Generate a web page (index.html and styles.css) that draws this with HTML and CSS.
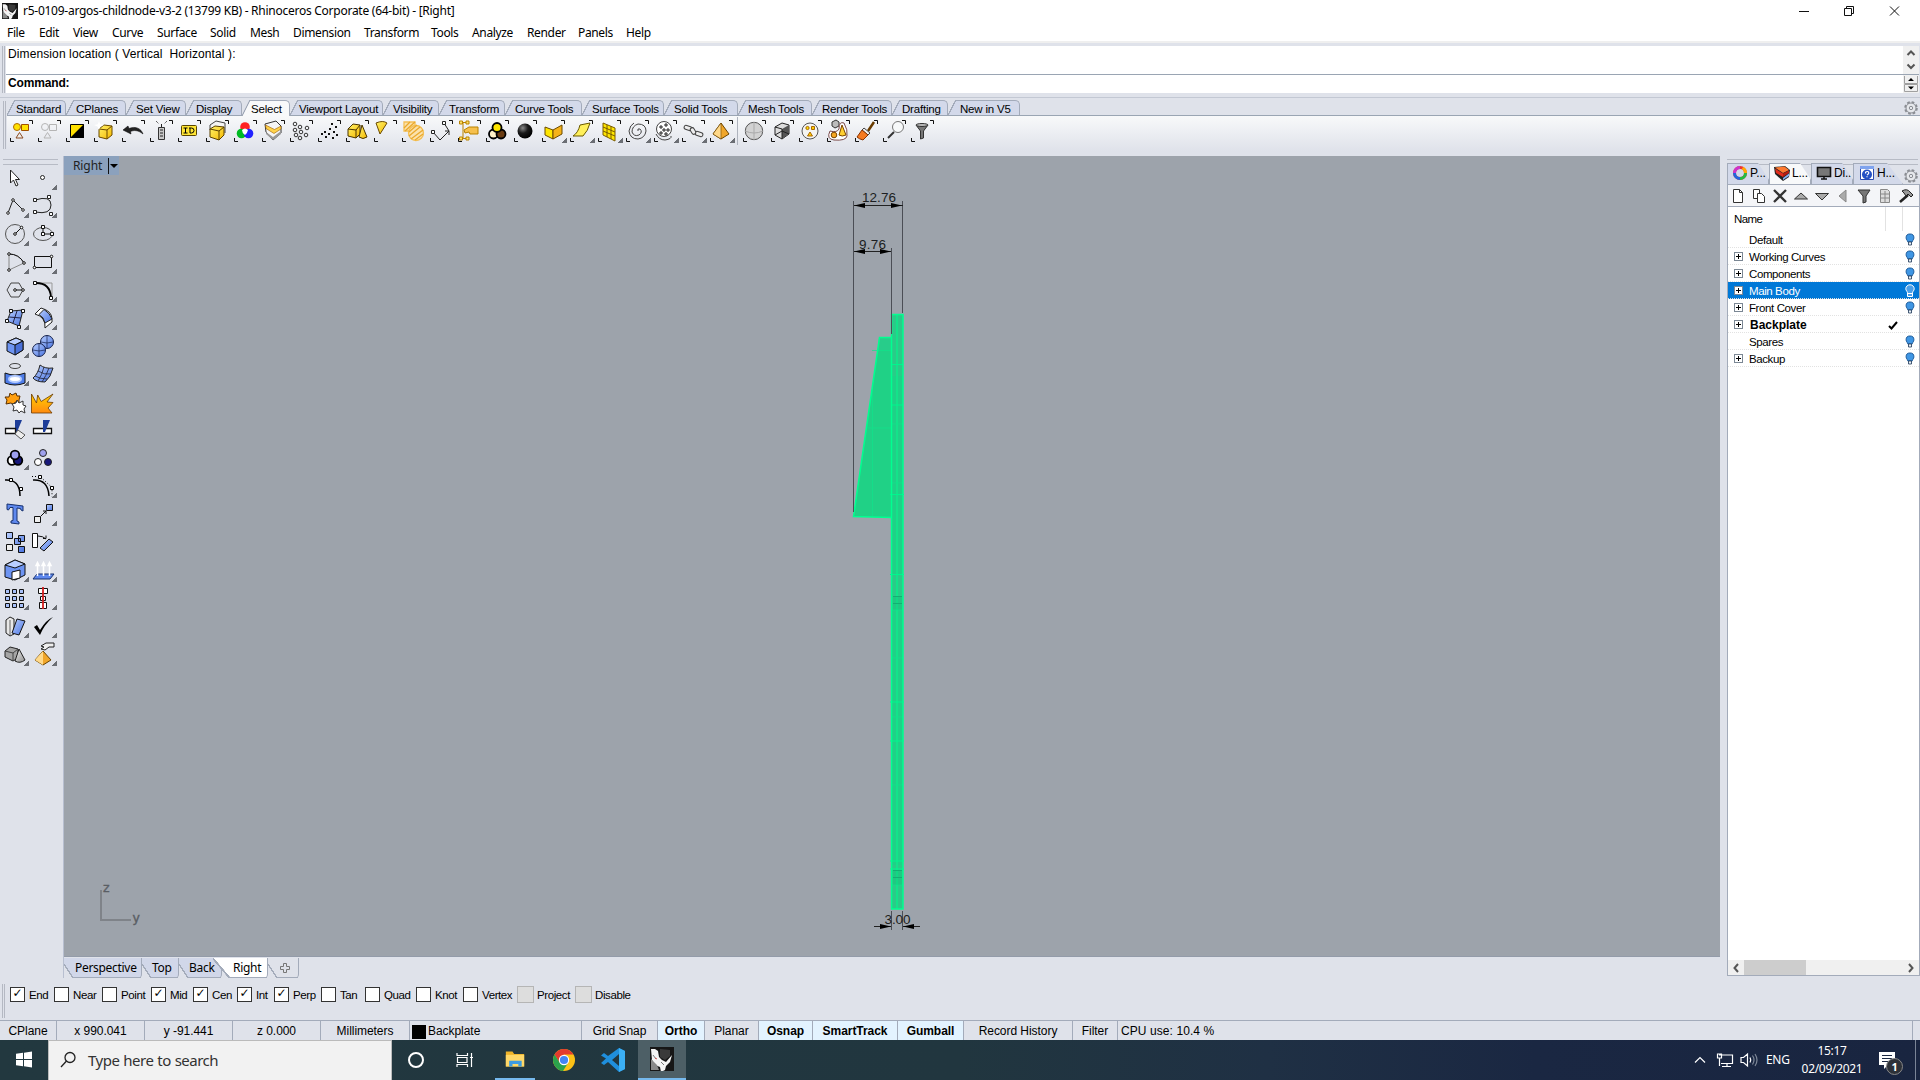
FILE: index.html
```html
<!DOCTYPE html>
<html lang="en">
<head>
<meta charset="utf-8">
<title>r5-0109-argos-childnode-v3-2 - Rhinoceros Corporate</title>
<link rel="stylesheet" href="styles.css">
</head>
<body>
<svg class="defs" width="0" height="0">
<defs>
<linearGradient id="gy" x1="0" y1="0" x2="1" y2="1"><stop offset="0" stop-color="#fff36a"/><stop offset="1" stop-color="#f5b800"/></linearGradient>
<linearGradient id="gb" x1="0" y1="0" x2="1" y2="1"><stop offset="0" stop-color="#b8ceff"/><stop offset="1" stop-color="#4a74e0"/></linearGradient>
<linearGradient id="gg" x1="0" y1="0" x2="1" y2="1"><stop offset="0" stop-color="#f2f2f2"/><stop offset="1" stop-color="#8d8d8d"/></linearGradient>
<linearGradient id="go" x1="0" y1="0" x2="0" y2="1"><stop offset="0" stop-color="#ffd000"/><stop offset="1" stop-color="#ff8a10"/></linearGradient>
<radialGradient id="gk" cx=".35" cy=".3" r=".7"><stop offset="0" stop-color="#888"/><stop offset=".5" stop-color="#1a1a1a"/><stop offset="1" stop-color="#000"/></radialGradient>
<symbol id="br" viewBox="0 0 28 28"><path d="M22 3.5h3.5V7M3.500 21v3.500H7" fill="none" stroke="#111"/></symbol>
<symbol id="rhino" viewBox="0 0 24 24"><path d="M0 0h24v24H0z" fill="#161616"/><path d="M1 2l4 0 3 2 1 6 3 3 4 2 6-7-2 7-4 4-1 4-4 2-1-5-5-2-3-5z" fill="#f4f4f4"/><path d="M10 2l10 1v6l-5 4-5-3z" fill="#3a3a3a"/><path d="M1 12l6 6 2 5H1z" fill="#8a8a8a"/><path d="M3 8l3 4M11 15l3 3" stroke="#777" fill="none"/><path d="M5 11l2 1" stroke="#c55"/></symbol>
<symbol id="gear" viewBox="0 0 16 16"><circle cx="8" cy="8" r="5.700" fill="none" stroke="#8a8d93" stroke-width="2.200" stroke-dasharray="2.600 1.870"/><circle cx="8" cy="8" r="5" fill="#e6e8ec" stroke="#8a8d93"/><circle cx="8" cy="8" r="1.700" fill="none" stroke="#8a8d93"/></symbol>
<symbol id="bulb" viewBox="0 0 10 14"><path d="M5 1a3.800 3.800 0 0 1 3.900 3.800c0 1.800-1.400 2.500-1.600 4H2.700c-.2-1.500-1.600-2.200-1.600-4A3.800 3.800 0 0 1 5 1z" fill="#3f96e4" stroke="#1d5c9c"/><path d="M3.500 9h3v3h-3z" fill="#e8f0f8" stroke="#1c3554" stroke-width=".8"/></symbol>
</defs>
</svg>

<header class="titlebar">
  <svg class="app-icon"><use href="#rhino"/></svg>
  <h1 class="title">r5-0109-argos-childnode-v3-2 (13799 KB) - Rhinoceros Corporate (64-bit) - [Right]</h1>
  <svg class="win-buttons" viewBox="0 0 112 20" fill="none" stroke="#111"><path d="M1 10.500h10M46.500 7.500h7v7h-7zM48.500 7.500v-2h7v7h-2M92 5.500l9 9M101 5.500l-9 9"/></svg>
</header>

<nav class="menubar"><span>File</span><span>Edit</span><span>View</span><span>Curve</span><span>Surface</span><span>Solid</span><span>Mesh</span><span>Dimension</span><span>Transform</span><span>Tools</span><span>Analyze</span><span>Render</span><span>Panels</span><span>Help</span></nav>

<section class="command">
  <div class="cmd-box">
    <div class="cmd-history"><p>Dimension location ( Vertical&nbsp; Horizontal ):</p>
      <svg class="cmd-scroll" viewBox="0 0 16 28" fill="none" stroke="#555" stroke-width="2"><path d="M4.500 9L8 5.500 11.500 9M4.500 18.500L8 22l3.500-3.500"/></svg></div>
    <div class="cmd-line"><b>Command:</b>
      <svg class="cmd-scroll" viewBox="0 0 16 18"><path d="M1.500 1v7.500h13V1M1.500 9.500h13v7h-13z" fill="#f0f0f0" stroke="#a0a0a0"/><path d="M5 6h6L8 3zM5 11.500h6L8 14.500z" fill="#000"/></svg></div>
  </div>
</section>

<section class="toolbar">
  <div class="tool-tabs">
    <div class="tabs"><span>Standard</span><span>CPlanes</span><span>Set View</span><span>Display</span><span class="on">Select</span><span>Viewport Layout</span><span>Visibility</span><span>Transform</span><span>Curve Tools</span><span>Surface Tools</span><span>Solid Tools</span><span>Mesh Tools</span><span>Render Tools</span><span>Drafting</span><span>New in V5</span></div>
    <svg class="gear"><use href="#gear"/></svg>
  </div>
  <div class="tool-icons">
    <svg viewBox="0 0 28 28"><use href="#br"/><circle cx="10" cy="10" r="3.500" fill="#ffe100" stroke="#b06a00"/><path d="M14.500 7.500h7v6h-7z" fill="#ffe100" stroke="#a05000"/><path d="M12.500 15.500l3.500 5.500H9z" fill="#eee" stroke="#8a4a20"/></svg>
    <svg viewBox="0 0 28 28"><use href="#br"/><g fill="none" stroke="#b5b5b5"><circle cx="10" cy="10" r="3.500"/><path d="M14.500 7.500h7v6h-7zM12.500 15.500l3.500 5.500H9z"/></g></svg>
    <svg viewBox="0 0 28 28"><use href="#br"/><path d="M7.500 7.500h13v13h-13z" fill="#ffe000" stroke="#000"/><path d="M21 7v14H7z"/></svg>
    <svg viewBox="0 0 28 28"><use href="#br"/><path d="M8 12l5-4 8 1v9l-5 4-8-2z" fill="url(#gy)" stroke="#6b4a00"/><path d="M8 12l8 1 5-4M16 13v9" fill="none" stroke="#6b4a00"/><path d="M8 4l1.200 3.200L13 8l-3.500 1.500L8 13l-1.500-3.500L3 8l3.800-.8z" fill="#fff"/></svg>
    <svg viewBox="0 0 28 28"><use href="#br"/><path d="M4 13l5-4 1 2.500c6-2.500 12-.5 14 5.500-5-4-9-4-12.500-2.500L12 17z" fill="#222" stroke="#000" stroke-width=".5"/></svg>
    <svg viewBox="0 0 28 28"><use href="#br"/><path d="M11.500 10.500h6v12h-6z" fill="#c9c9c9" stroke="#333"/><path d="M13 13h3m-3 3h3m-3 3h3M14.500 10V7" stroke="#222" fill="none"/><path d="M9 4l3 3M20 4l-3 3" stroke="#222" stroke-dasharray="1 1"/></svg>
    <svg viewBox="0 0 28 28"><use href="#br"/><rect x="6.500" y="8.500" width="15" height="10" rx="1" fill="#ffe533" stroke="#5a4600"/><path d="M8.500 11h4m-2 0v5m-2 0h4M15 11v5h1.500q2.500 0 2.500-2.500T16.500 11H14" fill="none" stroke="#000"/></svg>
    <svg viewBox="0 0 28 28"><use href="#br"/><path d="M7 13V8l6-4 9 2v10" fill="#f4f4f4" stroke="#444"/><path d="M7 12l5-3 9 1v8l-5 5-9-3z" fill="url(#gy)" stroke="#5a4000"/><path d="M7 12l9 2 5-4M16 14v9" fill="none" stroke="#5a4000"/></svg>
    <svg viewBox="0 0 28 28"><use href="#br"/><circle cx="14" cy="10" r="4.800" fill="#f22"/><circle cx="10.500" cy="16.500" r="4.800" fill="#0b2"/><circle cx="17.500" cy="16.500" r="4.800" fill="#22f"/><path d="M11 13q3-3 6 0-1 4-3 5-3-2-3-5z" fill="#fff"/></svg>
    <svg viewBox="0 0 28 28"><use href="#br"/><path d="M6 7l11-3 5 5v7l-8 7-7-8z" fill="#f5f5f5" stroke="#333"/><path d="M7 15l7 5 8-6v3l-8 6-7-6z" fill="#999"/><path d="M6.500 8l9 4.500L22 9v3l-7 4.500-8-5z" fill="#ffd34a" stroke="#9a5a00" stroke-width=".6"/></svg>
    <svg viewBox="0 0 28 28"><use href="#br"/><g fill="none" stroke="#333"><circle cx="8" cy="7" r="1.800"/><circle cx="13" cy="10" r="1.800"/><circle cx="20" cy="11" r="1.800"/><circle cx="8" cy="13" r="1.800"/><circle cx="14" cy="15" r="1.800"/><circle cx="19" cy="18" r="1.800"/><circle cx="9" cy="18" r="1.800"/><circle cx="13" cy="21" r="1.800"/></g></svg>
    <svg viewBox="0 0 28 28"><use href="#br"/><path d="M16 6h2v2h-2zM20 9h2v2h-2zM14 11h2v2h-2zM9 14h2v2H9zM13 16h2v2h-2zM18 14h2v2h-2zM21 17h2v2h-2zM6 16h2v2H6zM10 19h2v2h-2zM17 20h2v2h-2z" fill="#111"/></svg>
    <svg viewBox="0 0 28 28"><use href="#br"/><path d="M5 12l5-5 7 1v9l-4 4-8-2z" fill="url(#gy)" stroke="#4a3400"/><path d="M5 12l8 1 4-5M13 13v8" fill="none" stroke="#4a3400"/><path d="M19 8l5 12q-4 3-8 0z" fill="url(#gy)" stroke="#4a3400"/></svg>
    <svg viewBox="0 0 28 28"><use href="#br"/><path d="M5 6q7-3 11 0L9 17z" fill="url(#gy)" stroke="#6b4a00"/></svg>
    <svg viewBox="0 0 28 28"><use href="#br"/><g stroke="#f3bf55" stroke-width="1.300" fill="#fbe2ac"><path d="M5 5h11v9H5z"/><circle cx="17" cy="16" r="7.500"/><path d="M5 11l6-6M6 14L16 5M10 15l8-7M10 19l11-9M12 22l12-9M16 23l8-6" fill="none" stroke="#eaa92c"/></g></svg>
    <svg viewBox="0 0 28 28"><use href="#br"/><path d="M17 6l5 8M6 15l7 8 9-9m-4 0h4v4" fill="none" stroke="#222"/><path d="M15.500 4.500h3v3h-3zM4.500 13.500h3v3h-3z" fill="#fff" stroke="#222"/></svg>
    <svg viewBox="0 0 28 28"><use href="#br"/><path d="M5 5.500h9M5 21.500h9M8 6v15" stroke="#b98200" fill="none"/><path d="M4.500 4h3v3h-3zM11 4h3v3h-3zM4.500 20h3v3h-3zM11 20h3v3h-3z" fill="#ffe36a" stroke="#b98200"/><path d="M9 13l5-3h9v7h-8l-1-2-4 1z" fill="#f6c04d" stroke="#b98200"/></svg>
    <svg viewBox="0 0 28 28"><use href="#br"/><g stroke="#000" stroke-width="1.800"><circle cx="10.500" cy="17" r="4.500" fill="#fff1c8"/><circle cx="18" cy="17" r="4.500" fill="#6a3c12"/><circle cx="14" cy="10.500" r="4.500" fill="#ffe600"/></g></svg>
    <svg viewBox="0 0 28 28"><use href="#br"/><circle cx="14" cy="14" r="7.500" fill="url(#gk)"/></svg>
    <svg class="fly" viewBox="0 0 28 28"><use href="#br"/><path d="M6 10l8 3v9l-8-4z" fill="#ffe600" stroke="#6b4a00"/><path d="M14 13l9-5v9l-9 5z" fill="#f5b218" stroke="#6b4a00"/></svg>
    <svg class="fly" viewBox="0 0 28 28"><use href="#br"/><path d="M6 19q5-3 7-11l10-2q-2 8-7 13z" fill="#fff05a" stroke="#6b5a00"/></svg>
    <svg class="fly" viewBox="0 0 28 28"><use href="#br"/><path d="M8 6l12 5v13L8 18z" fill="#ffe600" stroke="#7a5c00"/><path d="M12 8v12M16 9v13M8 10l12 5M8 14l12 5" stroke="#7a5c00" fill="none"/></svg>
    <svg class="fly" viewBox="0 0 28 28"><use href="#br"/><path d="M15 14q-1-3 2-2 3 3-1 6-5 2-7-3 0-6 6-8 8 0 8 7-1 7-8 8-8 0-9-8 1-6 5-8" fill="none" stroke="#444"/></svg>
    <svg class="fly" viewBox="0 0 28 28"><use href="#br"/><circle cx="13" cy="12" r="7.500" fill="#fff" stroke="#444"/><path d="M9 9h2v2H9zM14 7h2v2h-2zM12 12h2v2h-2zM9 15h2v2H9zM16 12h2v2h-2zM14 16h2v2h-2z" fill="none" stroke="#222"/><path d="M5 17q3 6 9 6 7-1 6-4" fill="none" stroke="#444"/></svg>
    <svg class="fly" viewBox="0 0 28 28"><use href="#br"/><g fill="#eee" stroke="#444"><rect x="5" y="9" width="8" height="4" rx="2" transform="rotate(20 9 11)"/><rect x="16" y="15" width="8" height="4" rx="2" transform="rotate(20 20 17)"/><rect x="10.500" y="12" width="7" height="4" rx="2" transform="rotate(60 14 14)"/></g></svg>
    <svg class="fly" viewBox="0 0 28 28"><use href="#br"/><path d="M14 6l8 11-8 5-8-5z" fill="#f0a62a" stroke="#6b4400"/><path d="M14 6v16l-8-5z" fill="#ffd98a" stroke="#6b4400" stroke-width=".6"/></svg>
    <i class="tool-sep"></i>
    <svg viewBox="0 0 28 28"><use href="#br"/><circle cx="14" cy="14" r="8.700" fill="#d2d2d2" stroke="#555"/><path d="M14 5v18M5 14q9 4 18 0" stroke="#aaa" fill="none"/></svg>
    <svg viewBox="0 0 28 28"><use href="#br"/><path d="M7 10l7-4 7 2v9l-7 5-7-4z" fill="#ddd" stroke="#222"/><path d="M14 12l7-4v9l-7 5z" fill="#555"/><path d="M7 10l7 2v10M7 18l7-4 7 3" stroke="#222" fill="none"/></svg>
    <svg viewBox="0 0 28 28"><use href="#br"/><circle cx="14" cy="14" r="8" fill="#f4f4f0" stroke="#555"/><circle cx="11.500" cy="11" r="1.600" fill="#ffe100" stroke="#a60"/><path d="M15.500 9.500h3v3h-3zM14 15l2.500 4h-5z" fill="#ffd000" stroke="#a60"/></svg>
    <svg viewBox="0 0 28 28"><use href="#br"/><path d="M8 5l4-2 3 2v4l-4 2-3-2z" fill="#bbb" stroke="#333"/><path d="M6 14q-4 8 4 9 12 1 13-4 1-6-3-13-5-2-5 6-2 4-9 2z" fill="#fff" stroke="#7a4a4a"/><circle cx="10" cy="18" r="2.800" fill="#f5a623" stroke="#7a4400"/><path d="M18 8l4 10q-4 2-7 0z" fill="#ffcf30" stroke="#7a4400"/></svg>
    <svg viewBox="0 0 28 28"><use href="#br"/><path d="M22 5l-6 9" stroke="#6b3d00" stroke-width="2.500"/><path d="M12 11l6 5-2 2-6-5z" fill="#eee" stroke="#444"/><path d="M10 13l6 5-5 5q-4-1-6-3z" fill="#f57a20" stroke="#8a3400"/></svg>
    <svg viewBox="0 0 28 28"><use href="#br"/><path d="M8 21l6-6" stroke="#333" stroke-width="2"/><circle cx="18" cy="10" r="5.500" fill="#f7f9fa" stroke="#777"/></svg>
    <svg viewBox="0 0 28 28"><use href="#br"/><path d="M8 8h12l-4.500 6v7l-3 1v-8z" fill="#777" stroke="#333"/><ellipse cx="14" cy="8" rx="6" ry="1.500" fill="#bbb" stroke="#333"/></svg>
  </div>
</section>

<main class="workspace">
  <aside class="sidebar">
    <svg viewBox="0 0 28 28"><path d="M9.500 6v13l3-3 2.500 6 2-1-2.500-5.500h4z" fill="#fff" stroke="#222"/></svg>
    <svg class="fly" viewBox="0 0 28 28"><circle cx="13.500" cy="13.500" r="2" fill="#fff" stroke="#222"/></svg>
    <svg class="fly" viewBox="0 0 28 28"><g fill="#fff" stroke="#222"><path d="M7 21l5-13 10 10" fill="none"/><circle cx="7" cy="21" r="1.300"/><circle cx="12" cy="8" r="1.300"/><circle cx="22" cy="18" r="1.300"/></g></svg>
    <svg class="fly" viewBox="0 0 28 28"><g fill="#fff" stroke="#222"><path d="M6 8q16-5 16 5t-16 7" fill="none"/><path d="M4.500 6.500h3v3h-3zM18.500 3.500h3v3h-3zM4.500 18.500h3v3h-3zM20.500 20.500h3v3h-3z"/></g></svg>
    <svg class="fly" viewBox="0 0 28 28"><circle cx="14" cy="14" r="9.500" fill="none" stroke="#555"/><path d="M14 14l6-6" stroke="#111"/><g fill="#fff" stroke="#111"><circle cx="14" cy="14" r="1.300"/><circle cx="20.500" cy="7.500" r="1.300"/></g></svg>
    <svg class="fly" viewBox="0 0 28 28"><ellipse cx="14" cy="14" rx="9.500" ry="6.500" fill="none" stroke="#555"/><path d="M14 7v7h9" stroke="#111" fill="none"/><path d="M12.500 5.500h3v3h-3zM12.500 12.500h3v3h-3zM21.500 12.500h3v3h-3z" fill="#fff" stroke="#111"/></svg>
    <svg class="fly" viewBox="0 0 28 28"><path d="M8 22V6q10 0 15 9z" fill="none" stroke="#888"/><path d="M8 6q10 0 15 9" fill="none" stroke="#111"/><g fill="#fff" stroke="#111"><circle cx="8" cy="6" r="1.300"/><circle cx="8" cy="22" r="1.300"/><circle cx="23" cy="15" r="1.300"/></g></svg>
    <svg class="fly" viewBox="0 0 28 28"><path d="M5.500 8.500h17v11h-17z" fill="none" stroke="#111"/><g fill="#fff" stroke="#111"><circle cx="22.500" cy="8.500" r="1.300"/><circle cx="5.500" cy="19.500" r="1.300"/></g></svg>
    <svg class="fly" viewBox="0 0 28 28"><path d="M6 14l4-7h8l4 7-4 7h-8z" fill="none" stroke="#444"/><path d="M14 14h8" stroke="#111"/><g fill="#fff" stroke="#111"><circle cx="14" cy="14" r="1.300"/><circle cx="22" cy="14" r="1.300"/></g></svg>
    <svg class="fly" viewBox="0 0 28 28"><path d="M7 7h16v15" fill="none" stroke="#999"/><path d="M7 7q14 0 15 14" fill="none" stroke="#000" stroke-width="1.800"/><path d="M4.500 5.500h3v3h-3zM20.500 20.500h3v3h-3z" fill="#fff" stroke="#111"/></svg>
    <svg class="fly" viewBox="0 0 28 28"><path d="M10 7l12-1-4 16-12-5z" fill="url(#gb)" stroke="#222"/><path d="M16 7l-4 12M8 13l12 1" stroke="#224" fill="none"/><path d="M8.500 5.500h3v3h-3zM20.500 5.500h3v3h-3zM4.500 15.500h3v3h-3zM16.500 21.500h3v3h-3z" fill="#fff" stroke="#111"/></svg>
    <svg class="fly" viewBox="0 0 28 28"><path d="M6 10l6-6q11 3 11 11v3l-7 6q1-11-10-14z" fill="#fff" stroke="#222"/><path d="M15 5.500q6 3.500 8 9.500l-7 4q-1-6-6-8.500z" fill="url(#gb)" stroke="#222"/></svg>
    <svg class="fly" viewBox="0 0 28 28"><path d="M6 10l9-4 7 3v9l-8 5-8-4z" fill="#6d94f2" stroke="#111"/><path d="M6 10l8 3 8-4-7-3z" fill="#b9ceff" stroke="#111"/><path d="M14 13l8-4v9l-8 5z" fill="#4a70d8" stroke="#111"/></svg>
    <svg class="fly" viewBox="0 0 28 28"><g fill="url(#gb)" stroke="#14204a"><circle cx="18" cy="10" r="6.500"/><circle cx="10" cy="18" r="6.500"/></g><path d="M10 12v12M4 18q6 2 12 0M18 4v12M12 10q6 2 12 0" fill="none" stroke="#14204a" stroke-width=".7"/></svg>
    <svg class="fly" viewBox="0 0 28 28"><ellipse cx="14" cy="6" rx="5.500" ry="2.500" fill="none" stroke="#444"/><path d="M4 13q10 4 20 0v10q-10 4-20 0z" fill="#4f7de8" stroke="#111"/><ellipse cx="14" cy="19" rx="6" ry="3" fill="#fff" stroke="#b8ceff" stroke-width="2"/></svg>
    <svg class="fly" viewBox="0 0 28 28"><path d="M11 5q5 4 13 3-2 9-8 14-9 0-12-4 5-4 7-13z" fill="url(#gb)" stroke="#222"/><path d="M9 11q6 4 13 3M15 7q-2 8-6 14M20 8q-3 8-7 14M6 16q5 3 12 3" stroke="#223" fill="none" stroke-width=".8"/></svg>
    <svg viewBox="0 0 28 28"><path d="M9 5l2 2 4-2 1 3 3 0-1 4 0 3-4-1-1 3-3-2-5 1 1-4-2-3 4 0z" fill="#ff9f10" stroke="#5a3000"/><path d="M16 12l2 3 4-2 0 4 3 1-2 3 1 4-4-2-2 2-2-3-4 1 1-4-2-3 4-1z" fill="#fff" stroke="#333"/></svg>
    <svg viewBox="0 0 28 28"><path d="M2.500 25V6l5 9 1.200-8 3.500 6.500L24 6l-6 8 6 .5-5 5.500 4 5z" fill="url(#go)" stroke="#6b3a00" stroke-width=".8"/></svg>
    <svg viewBox="0 0 28 28"><path d="M14 4h7l-5 12h-2z" fill="#1c3c98"/><path d="M4.500 12.500h10v5h-10z" fill="#fff" stroke="#111" stroke-width="1.300"/><path d="M17 14l7 5-4 4-6-5z" fill="#eee" stroke="#555"/></svg>
    <svg viewBox="0 0 28 28"><path d="M4.500 12.500h18v5h-18z" fill="#fff" stroke="#111" stroke-width="1.300"/><path d="M14 4h7l-5 12h-2z" fill="#1c3c98"/></svg>
    <svg class="fly" viewBox="0 0 28 28"><g stroke="#000" stroke-width="1.800"><circle cx="11" cy="16.500" r="4.300" fill="#fff"/><circle cx="17" cy="16.500" r="4.300" fill="#18187a"/><circle cx="14" cy="11" r="4.300" fill="#9ea0ee"/></g></svg>
    <svg viewBox="0 0 28 28"><g stroke="#222"><circle cx="14" cy="9" r="3.500" fill="#9ea0ee"/><circle cx="9" cy="18" r="3.500" fill="#fff"/><circle cx="19" cy="18" r="3.500" fill="#18187a"/></g></svg>
    <svg viewBox="0 0 28 28"><path d="M4 8q15-1 15 16" fill="none" stroke="#000" stroke-width="1.500"/><path d="M8.500 6.500h3v3h-3zM18.500 15.500h3v3h-3z" fill="#fff" stroke="#000"/></svg>
    <svg class="fly" viewBox="0 0 28 28"><path d="M4 8q15-1 16 16" fill="none" stroke="#000" stroke-width="1.500"/><path d="M3 4.500h8l12 11v9" fill="none" stroke="#000" stroke-dasharray="1 2"/><path d="M9.500 3.500h3v3h-3zM21.500 14.500h3v3h-3z" fill="#fff" stroke="#000"/></svg>
    <svg viewBox="0 0 28 28"><path d="M6 4l16 2v5l-2-1-.5-1.500-3.500-.5v13l2 1v2l-8-1v-2l2-.500V7.500L9 7.500 7.500 10 6 9.500z" fill="#5e88ee" stroke="#16306e"/></svg>
    <svg class="fly" viewBox="0 0 28 28"><path d="M17.500 4.500h6v6h-6z" fill="url(#gb)" stroke="#111"/><path d="M5.500 16.500h6v6h-6z" fill="#eee" stroke="#111"/><path d="M12 16l5-5m-3 0h3v3" fill="none" stroke="#111"/></svg>
    <svg viewBox="0 0 28 28"><g fill="url(#gb)" stroke="#111"><path d="M5.500 4.500h6v6h-6zM17.500 7.500h6v6h-6zM13.500 10.500h6v6h-6zM17.500 18.500h6v6h-6z"/><path d="M5.500 16.500h6v6h-6z" fill="#eee"/></g></svg>
    <svg viewBox="0 0 28 28"><path d="M3.500 5.500h5v14h-5z" fill="#fff" stroke="#111"/><path d="M11 20l9-9 4 3-9 9z" fill="url(#gb)" stroke="#111"/><path d="M9 8q5 0 8 3m-3-.500h3v-3" fill="none" stroke="#111"/></svg>
    <svg class="fly" viewBox="0 0 28 28"><path d="M4 9l10-5 10 4v11l-10 5-10-3z" fill="#6d94f2" stroke="#111"/><path d="M4 9l10 3 10-4-10-4z" fill="#b9ceff" stroke="#111"/><path d="M11 24v-8l8-2v8z" fill="#fff" stroke="#111"/></svg>
    <svg class="fly" viewBox="0 0 28 28"><path d="M8 18h17l-4 5H4z" fill="#5e88ee" stroke="#16306e"/><path d="M8.500 20V9M14.500 20V9M20.500 20V9M7 9.500l1.500-3 1.500 3zM13 9.500l1.500-3 1.500 3zM19 9.500l1.500-3 1.500 3z" fill="#fff" stroke="#fff" stroke-width="1.500"/></svg>
    <svg class="fly" viewBox="0 0 28 28"><path d="M4.500 5.500h4v4h-4zM11.500 5.500h4v4h-4zM18.500 5.500h4v4h-4zM4.500 12.500h4v4h-4zM11.500 12.500h4v4h-4zM18.500 12.500h4v4h-4zM4.500 19.500h4v4h-4zM11.500 19.500h4v4h-4zM18.500 19.500h4v4h-4z" fill="#a7c0fa" stroke="#111"/></svg>
    <svg class="fly" viewBox="0 0 28 28"><path d="M9.500 4.500h9v5h-9zM11.500 12.500h5v4h-5zM10.500 18.500h7v6h-7z" fill="#fff" stroke="#111"/><path d="M14 3v22" stroke="#d42020" stroke-width="1.800"/></svg>
    <svg class="fly" viewBox="0 0 28 28"><path d="M5 8l4-3 4 2v15l-4 2-4-3z" fill="#e8e8e8" stroke="#222"/><path d="M9 8v15" stroke="#666"/><path d="M16 7l8 2-6 14-7-2z" fill="url(#gb)" stroke="#111"/></svg>
    <svg class="fly" viewBox="0 0 28 28"><path d="M5 15l3-2 3 5Q17 8 24 5 15 13 11 23z" fill="#000"/></svg>
    <svg class="fly" viewBox="0 0 28 28"><path d="M4 11l5-4 8 2v9l-5 3-8-4z" fill="#a5a5a5" stroke="#222"/><path d="M4 11l8 2 5-4M12 13v8" fill="none" stroke="#444"/><path d="M18 9l6 11q-5 4-10 1z" fill="url(#gg)" stroke="#222"/></svg>
    <svg class="fly" viewBox="0 0 28 28"><path d="M14 11l8 9-8 5-8-5z" fill="#f0a62a" stroke="#6b4400"/><path d="M14 11v14l-8-5z" fill="#ffd98a"/><path d="M12 6l5-3h8v4h-5l-4 3-4-1 3-2z" fill="#eee" stroke="#222"/></svg>
  </aside>

  <section class="center">
    <div class="viewport">
      <div class="view-label"><span>Right</span><i></i></div>
      <svg class="scene" viewBox="64 156 1656 801">
        <path d="M879.500 337.500H891v180L853.500 516.500z" fill="#20d186"/>
        <path d="M879 338h12v12h-13z" fill="#28cc8a"/>
        <path d="M891 314h12v595h-12z" fill="#2acb88"/>
        <path d="M891 376h12v198h-12zM891 610h12v255h-12z" fill="#1fd187"/>
        <path d="M897 315v594" stroke="#14e38a" stroke-width="2"/>
        <path d="M893 596h9v14h-9zM893 870h9v15h-9z" fill="#10bf78" opacity=".35"/>
        <path d="M893 596.500h9M893 870.500h9M893 603.500h9M893 877.500h9" stroke="#12b072"/>
        <path d="M872 350.500h19M866 428h25M872.500 390v126M891 424h12M891 483h12M891 610h12M891 658h12M891 717h12M891 785h12M891 885h12" stroke="#10e48b" opacity=".7"/>
        <path d="M891 364.500h12M891 405h12M890 494.500h14M890 574.500h14M890 702h14M890 741h14M890 861h14M890 869h14" stroke="#00f58e" stroke-width="1.200"/>
        <path d="M891.500 337.500h-12L853.500 516.500l38 1M891.500 314.500h11.500v594.500h-11.500z" fill="none" stroke="#00ff90" stroke-width="1.500"/>
        <path d="M853.500 201v311M902.500 201v112M891.500 248v86M891.500 911v19M902.500 911v19" stroke="#4b4e55" fill="none"/>
        <path d="M854 205.500h49M854 251.500h37M874 926.500h17M903 926.500h17" stroke="#222"/>
        <path d="M854 205.500l11-2.500v5zM902 205.500l-11-2.500v5zM854 251.500l11-2.500v5zM891 251.500l-11-2.500v5zM891 926.500l-11-2.500v5zM903 926.500l11-2.500v5z" fill="#000"/>
        <g class="dim"><text x="862" y="202" textLength="34">12.76</text><text x="859" y="248.500" textLength="27">9.76</text><text x="884.500" y="923.500" textLength="26">3.00</text></g>
        <path d="M101 890v30h30" stroke="#7f8389" stroke-width="2" fill="none"/>
        <g class="axis"><text x="103" y="892">z</text><text x="132.500" y="922">y</text></g>
      </svg>
    </div>
    <div class="view-tabs"><span>Perspective</span><span>Top</span><span>Back</span><span class="on">Right</span><span class="add"><svg width="10" height="10" viewBox="0 0 10 10"><path d="M3.500.5h3v3h3v3h-3v3h-3v-3h-3v-3h3z" fill="none" stroke="#777"/></svg></span></div>
  </section>

  <aside class="panel">
    <div class="panel-tabs">
      <span class="ptab"><svg viewBox="0 0 16 16"><circle cx="8" cy="8" r="5.500" fill="none" stroke="#e33" stroke-width="3"/><path d="M8 2.500a5.500 5.500 0 0 0-5.500 5.500" fill="none" stroke="#c3c" stroke-width="3"/><path d="M2.500 8A5.500 5.500 0 0 0 8 13.500" fill="none" stroke="#26d" stroke-width="3"/><path d="M8 13.500A5.500 5.500 0 0 0 13.500 8" fill="none" stroke="#2b4" stroke-width="3"/><path d="M13.500 8a5.500 5.500 0 0 0-3-5" fill="none" stroke="#fa0" stroke-width="3"/></svg>P...</span>
      <span class="ptab on"><svg viewBox="0 0 16 16"><path d="M0 2l11-1 5 4-1 7-6 4-8-7z" fill="#222"/><path d="M1 2.500l9.500-1L15 5 9 8z" fill="#ff7a30"/><path d="M1 3.500l8 5V12L2 8z" fill="#e22c1c"/><path d="M9 8.500l6-3V8l-6 4z" fill="#b81c10"/><path d="M9 13l6-4.500v2.500l-6 4z" fill="#8ab0f0"/></svg>L...</span>
      <span class="ptab"><svg viewBox="0 0 16 16"><path d="M1.500 2.500h13v9h-13z" fill="#777" stroke="#111" stroke-width="1.600"/><path d="M5 14h6M8 12v2" stroke="#111" stroke-width="1.500"/></svg>Di...</span>
      <span class="ptab"><svg viewBox="0 0 16 16"><path d="M1.500 1.500h13v13h-13z" fill="#fff" stroke="#2a4ab0"/><path d="M1 1h14v3H1z" fill="#7fa3ee"/><circle cx="8" cy="9.500" r="5" fill="#2450c4"/><path d="M6.500 8.500q0-2 1.700-2t1.500 1.700Q9 9.500 8 10m0 1.300v1" fill="none" stroke="#fff" stroke-width="1.200"/></svg>H...</span>
      <svg class="gear"><use href="#gear"/></svg>
    </div>
    <div class="panel-body">
      <div class="panel-tools">
        <svg viewBox="0 0 16 16"><path d="M3.500 1.500h6l3 3v10h-9z" fill="#fff" stroke="#333"/><path d="M9.500 1.500v3h3" fill="none" stroke="#333"/></svg>
        <svg viewBox="0 0 16 16"><path d="M2.500 1.500h6v9h-6z" fill="#fff" stroke="#333"/><path d="M6.500 5.500h4l3 3v6h-7z" fill="#fff" stroke="#333"/></svg>
        <svg viewBox="0 0 16 16"><path d="M2 2l12 12M14 2L2 14" stroke="#333" stroke-width="2.300"/></svg>
        <svg viewBox="0 0 16 16"><path d="M1.500 11L8 5l6.500 6z" fill="#aaa" stroke="#333"/></svg>
        <svg viewBox="0 0 16 16"><path d="M1.500 5.500h13L8 12z" fill="#aaa" stroke="#333"/></svg>
        <svg viewBox="0 0 16 16"><path d="M11 2v12L4 8z" fill="#aaa" stroke="#888"/></svg>
        <svg viewBox="0 0 16 16"><path d="M2 2h12l-4 6v6l-3 1V8z" fill="#777" stroke="#333"/></svg>
        <svg viewBox="0 0 16 16"><path d="M3.500 1.500h7l2 2v11h-9zM3.500 6h9M3.500 10h9M8 3v11" fill="#ddd" stroke="#888"/></svg>
        <svg viewBox="0 0 16 16"><path d="M10 7l-8 7" stroke="#222" stroke-width="2.500"/><path d="M4 3q5-3 8 1l3 3-2 2-3-3-2 2-2-3z" fill="#999" stroke="#222"/></svg>
      </div>
      <div class="layer-head">Name</div>
      <ul class="layers">
        <li><i></i><span>Default</span><svg viewBox="0 0 10 14"><use href="#bulb"/></svg></li>
        <li><i class="plus"></i><span>Working Curves</span><svg viewBox="0 0 10 14"><use href="#bulb"/></svg></li>
        <li><i class="plus"></i><span>Components</span><svg viewBox="0 0 10 14"><use href="#bulb"/></svg></li>
        <li class="picked"><i class="plus"></i><span>Main Body</span><svg viewBox="0 0 10 14"><path d="M5 .8a4 4 0 0 1 4.200 4c0 1.800-1.500 2.500-1.700 4v3.700h-5V8.800C2.300 7.300.8 6.600.8 4.800A4 4 0 0 1 5 .8zM3 9.500h4" fill="#4a9fe8" stroke="#fff"/></svg></li>
        <li><i class="plus"></i><span>Front Cover</span><svg viewBox="0 0 10 14"><use href="#bulb"/></svg></li>
        <li class="current"><i class="plus"></i><span>Backplate</span><svg class="check" viewBox="0 0 10 14"><path d="M1 8l2.500 2.500L9 4" fill="none" stroke="#000" stroke-width="2"/></svg></li>
        <li><i></i><span>Spares</span><svg viewBox="0 0 10 14"><use href="#bulb"/></svg></li>
        <li><i class="plus"></i><span>Backup</span><svg viewBox="0 0 10 14"><use href="#bulb"/></svg></li>
      </ul>
      <div class="hscroll"><svg viewBox="0 0 16 16"><path d="M10 4L6.500 8l3.500 4" /></svg><i></i><svg viewBox="0 0 16 16"><path d="M6 4l3.500 4L6 12"/></svg></div>
    </div>
  </aside>
</main>

<section class="osnap">
  <label class="ck">End</label><label>Near</label><label>Point</label><label class="ck">Mid</label><label class="ck">Cen</label><label class="ck">Int</label><label class="ck">Perp</label><label>Tan</label><label>Quad</label><label>Knot</label><label>Vertex</label><label class="off">Project</label><label class="off">Disable</label>
</section>

<footer class="status"><span>CPlane</span><span>x 990.041</span><span>y -91.441</span><span>z 0.000</span><span>Millimeters</span><span class="layer"><i></i>Backplate</span><span>Grid Snap</span><span class="on">Ortho</span><span>Planar</span><span class="on">Osnap</span><span class="on">SmartTrack</span><span class="on">Gumball</span><span>Record History</span><span>Filter</span><span class="cpu">CPU use: 10.4 %</span><span></span></footer>

<footer class="taskbar">
  <svg class="start" viewBox="0 0 48 40"><path d="M16 13.800l7-1v6.200h-7zM24 12.700l8-1.200V19h-8zM16 20h7v6.200l-7-1zM24 20h8v7.500l-8-1.200z" fill="#fff"/></svg>
  <div class="search"><svg width="18" height="18" viewBox="0 0 18 18"><circle cx="11" cy="6.500" r="5" fill="none" stroke="#222" stroke-width="1.300"/><path d="M7.500 10L2 16" stroke="#222" stroke-width="1.300"/></svg>Type here to search</div>
  <div class="apps">
    <svg viewBox="0 0 48 40"><circle cx="24" cy="20" r="7" fill="none" stroke="#fff" stroke-width="2"/></svg>
    <svg viewBox="0 0 48 40"><path d="M16 13v2.500h10.500V13M16 27v-2.500h10.500V27M16.500 17.500h9.500v5h-9.500zM30.500 13v14M29 17.500h3" fill="none" stroke="#fff" stroke-width="1.200"/></svg>
    <svg class="open" viewBox="0 0 48 40"><path d="M13 11h8l2 3h12v15H13z" fill="#f0b429"/><path d="M13 15h22v14H13z" fill="#ffd868"/><path d="M17 29v-7h15v7h-4v-3h-7v3z" fill="#3d9be0"/></svg>
    <svg viewBox="0 0 48 40"><circle cx="24" cy="20" r="11" fill="#fbc116"/><path d="M14.500 14.500a11 11 0 0 1 19 0H24l-4 9z" fill="#e33b2e"/><path d="M14.500 14.500a11 11 0 0 0 8.500 16.500l5-8-8 0z" fill="#2ba24c"/><circle cx="24" cy="20" r="5.200" fill="#fff"/><circle cx="24" cy="20" r="4.100" fill="#4285f4"/></svg>
    <svg viewBox="0 0 48 40"><path d="M30 8l6 3v18l-6 3-11-10-4 3-3-2 5-4.500-5-3 3-2.500 4 3zM30 14l-7 6 7 6z" fill="#1f8fdd" fill-rule="evenodd"/><path d="M30 8l6 3v18l-6 3z" fill="#3bb0f5"/></svg>
    <span class="active"><svg width="24" height="24"><use href="#rhino"/></svg></span>
  </div>
  <div class="tray">
    <svg viewBox="0 0 70 40" fill="none" stroke="#fff" stroke-width="1.200"><path d="M6 22.500l5-5 5 5M30 15h13.500v8.500H32M28.500 14h4v4h-4zM38 23.500v3M33 26.500h9M30.500 18v8"/><path d="M52 17.500h2.500l4-3.500v12l-4-3.500H52zM61 17.500q1.500 2.500 0 5"/><path d="M63.500 15.500q3 4.500 0 9M66 14q4 6 0 12" stroke="#7e8898"/></svg>
    <span class="lang">ENG</span>
    <span class="clock">15:17<br>02/09/2021</span>
    <span class="note"><svg viewBox="0 0 24 24"><path d="M2 4h16v13h-7l-4 4v-4H2z" fill="#fff"/><path d="M5 7.500h10M5 10.500h10M5 13.500h7" stroke="#1b2842"/></svg><b>1</b></span>
  </div>
</footer>
</body>
</html>
```

FILE: styles.css
```css
* { box-sizing: border-box; }
body { margin: 0; width: 1920px; height: 1080px; overflow: hidden; display: flex; flex-direction: column; background: #dfe2ea; color: #000; font: 11.5px/14px "Liberation Sans", Arial, sans-serif; }
svg { display: block; flex: none; }
.defs { position: absolute; }

.titlebar { height: 22px; flex: none; display: flex; align-items: center; padding-left: 2px; background: #fff; }
.app-icon { width: 16px; height: 16px; }
.title { flex: 1; margin: 0 0 0 5px; font: 12px/20px "Noto Sans", sans-serif; letter-spacing: -.26px; white-space: nowrap; }
.win-buttons { width: 112px; height: 20px; margin: -1px 10px 0 0; }
.menubar { height: 21px; flex: none; display: grid; grid-template-columns: 32px 34px 39px 45px 53px 40px 43px 71px 67px 41px 55px 51px 48px 40px; padding-left: 7px; background: #fff; border-bottom: 2px solid #efefef; font: 12px/22px "Noto Sans", sans-serif; letter-spacing: -.35px; }

.command { height: 55px; flex: none; padding: 3px 1px 4px 2px; border-bottom: 1px solid #c3c8d3; display: flex; }
.cmd-box { flex: 1; border-left: 3px double #b4b8c2; padding-left: 1px; height: 47px; font-size: 12px; }
.cmd-history, .cmd-line { display: flex; justify-content: space-between; background: #fff; padding-left: 2px; }
.cmd-history { height: 29px; border-bottom: 1px solid #9aa5b3; }
.cmd-history p { margin: 1px 0 0; letter-spacing: .11px; }
.cmd-line { height: 18px; line-height: 17px; letter-spacing: -.15px; }
.cmd-scroll { width: 16px; height: 100%; background: #f0f0f0; }

.toolbar { height: 58px; flex: none; padding: 2px 0 0; background: linear-gradient(90deg, #b4b8c2 1px, transparent 1px 2px, #b4b8c2 2px 3px, transparent 3px) 3px 3px / 4px 48px no-repeat; }
.tool-tabs { height: 16px; display: flex; justify-content: space-between; padding: 0 1px 0 0; margin-left: 7px; border-bottom: 1px solid #9aa5b3; }
.tabs { display: grid; grid-template-columns: 59px 60px 60px 56px 48px 93px 56px 66px 77px 82px 74px 74px 80px 56px 72px; }
.tabs span { position: relative; margin-left: 8px; height: 15px; padding-left: 2px; line-height: 16px; white-space: nowrap; background: #d3d9ea; border: solid #a3abba; border-width: 1px 1px 0 0; border-radius: 0 5px 0 0; letter-spacing: -.2px; }
.tabs span::before { content: ""; position: absolute; left: -8px; top: -1px; width: 8px; height: 15px; background: linear-gradient(to bottom right, transparent 45%, #a3abba 46%, #a3abba 54%, #d3d9ea 55%); }
.tabs .on { height: 16px; padding-left: 1px; background: #f8f9fa; }
.tabs .on::before { height: 16px; background: linear-gradient(to bottom right, transparent 45%, #a3abba 46%, #a3abba 54%, #f8f9fa 55%); }
.tabs span:first-child, .tabs .on + span { padding-left: 1px; }
.tabs span:last-child { padding-left: 4px; }
.gear { width: 16px; height: 16px; }
.tool-icons { height: 35px; display: flex; margin-left: 7px; padding: 1px 0 0; background: linear-gradient(#f8f9fa, #dfe2ea); }
.tool-icons svg { width: 28px; height: 28px; }
.tool-sep { width: 6px; height: 28px; border-left: 1px solid #aeb3bd; margin-left: 2px; margin-right: -3px; }
.fly { background: linear-gradient(135deg, transparent 50%, #6b6e74 51%) 22px 20px / 6px 6px no-repeat; }

.workspace { height: 822px; flex: none; display: flex; }
.sidebar { width: 64px; display: grid; grid-template-columns: 28px 28px; grid-template-rows: 5px; grid-auto-rows: 28px; align-content: start; padding: 3px 0 0 1px; border-right: 1px solid #b8bfd0; }
.sidebar::before, .panel::before { content: ""; height: 4px; border: solid #b7bbc5; border-width: 1px 0; }
.sidebar::before { grid-column: 1 / 3; margin: 0 -1px 1px 2px; }
.sidebar svg { width: 28px; height: 28px; }
.center { width: 1656px; flex: none; }
.viewport { height: 801px; background: #9da3ab; position: relative; border-bottom: 1px solid #939ba9; }
.scene { width: 1656px; height: 801px; }
.view-label { position: absolute; left: 0; top: 0; width: 55px; height: 19px; display: flex; align-items: center; padding: 1px 0 0 9px; background: #8ba1bd; font: 12px/19px "Noto Sans", sans-serif; color: #222; letter-spacing: -.1px; }
.view-label span { width: 36px; border-right: 1px solid #111; line-height: 16px; }
.view-label i { margin-left: 1px; border: 4px solid transparent; border-top-color: #000; border-bottom: 0; }
.dim text { font: 13.5px "Liberation Sans", sans-serif; fill: #1c1e21; }
.axis text { font: 12.5px "DejaVu Sans", sans-serif; fill: #5a5e64; stroke: #5a5e64; stroke-width: .4px; }
.view-tabs { display: grid; grid-template-columns: 78px 37px 43px 46px 31px; height: 20px; margin-top: 1px; font: 12px/20px "Noto Sans", sans-serif; letter-spacing: -.3px; }
.view-tabs span { position: relative; padding-left: 11px; background: linear-gradient(to top right, transparent 45%, #a3abba 46%, #a3abba 54%, #d1d7e9 55%) 0 100% / 9px 14px no-repeat, linear-gradient(#d1d7e9, #d1d7e9) 0 0 / 9px 6px no-repeat, linear-gradient(#d1d7e9, #d1d7e9) 9px 0 / 100% 100% no-repeat; border-right: 1px solid #a3abba; border-radius: 0 0 4px 0; }
.view-tabs span + span { padding-left: 10px; }
.view-tabs span::after { content: ""; position: absolute; left: 9px; right: 0; bottom: 0; border-bottom: 1px solid #a3abba; }
.view-tabs .on.on { margin-left: -9px; padding-left: 20px; background: linear-gradient(to top right, transparent 45%, #a3abba 46%, #a3abba 52%, #fff 53%) 0 0 / 17px 20px no-repeat, linear-gradient(#fff, #fff) 17px 0 / 100% 100% no-repeat; }
.view-tabs .on::after { left: 17px; }
.view-tabs .add.add { background: linear-gradient(to top right, transparent 45%, #a3abba 46%, #a3abba 54%, transparent 55%) 0 100% / 9px 14px no-repeat; padding: 5px 0 0 12px; }

.panel { flex: 1; margin-left: 7px; display: flex; flex-direction: column; padding-top: 3px; }
.panel::before { margin: 0 2px 0 0; flex: none; }
.panel-tabs { height: 21px; flex: none; display: flex; align-items: flex-end; font-size: 12px; letter-spacing: -.2px; margin-top: -2px; }
.ptab { width: 42px; height: 21px; display: flex; gap: 2px; padding: 1px 0 0 4px; background: #d3d9ea; border: 1px solid #a3abba; border-bottom: 0; clip-path: polygon(0 0, 31px 0, 100% 80%, 100% 100%, 0 100%); white-space: nowrap; line-height: 16px; }
.ptab.on { background: #f8f9fa; }
.ptab:nth-child(4) { width: 50px; padding-left: 5px; clip-path: polygon(0 0, 34px 0, 100% 100%, 0 100%); }
.ptab svg { width: 16px; height: 16px; }
.panel-tabs > .gear { margin-bottom: 0; }
.panel-body { height: 792px; flex: none; display: flex; flex-direction: column; border: 1px solid #a3abba; background: #fff; }
.panel-tools { height: 22px; display: grid; grid-template-columns: repeat(9, 21px); padding-left: 2px; align-items: center; background: #f4f5f8; border-bottom: 1px solid #a3abba; }
.panel-tools svg { width: 16px; height: 16px; }
.layer-head { height: 24px; padding: 5px 0 0 6px; letter-spacing: -.6px; background: linear-gradient(#e2e2e2, #e2e2e2) 157px 0 / 1px 100% no-repeat, linear-gradient(#e2e2e2, #e2e2e2) 174px 0 / 1px 100% no-repeat; }
.layers { list-style: none; margin: 0; padding: 0; flex: 1; }
.layers li { height: 17px; display: flex; align-items: center; padding: 1px 4px 0 6px; border-bottom: 1px dotted #e2e2e2; letter-spacing: -.4px; }
.layers i { width: 9px; height: 9px; margin-right: 6px; }
.layers .plus { border: 1px solid #7b8794; background: linear-gradient(#000, #000) 50% 50% / 5px 1px no-repeat, linear-gradient(#000, #000) 50% 50% / 1px 5px no-repeat, #fff; }
.layers span { flex: 1; }
.layers svg { width: 10px; height: 14px; }
.layers .check { margin-right: 17px; }
.layers .picked { background: #0078d7; color: #fff; }
.layers .current { font: bold 12px "Liberation Sans", sans-serif; letter-spacing: 0; }
.layers .current span { padding-left: 1px; }
.hscroll { height: 15px; display: flex; align-items: center; background: #f0f0f0; }
.hscroll svg { width: 16px; height: 16px; fill: none; stroke: #555; stroke-width: 2; }
.hscroll i { width: 62px; height: 15px; background: #cdcdcd; margin-right: auto; }

.osnap { height: 34px; flex: none; margin: 6px 0 2px 2px; display: grid; grid-template-columns: 44px 48px 49px 42px 44px 37px 47px 44px 51px 47px 54px 58px 60px; padding: 3px 0 0 5px; border-left: 3px double #b4b8c2; line-height: 14px; }
.osnap label { display: flex; align-items: center; gap: 4px; height: 15px; letter-spacing: -.4px; }
.osnap label::before { content: ""; width: 13px; height: 13px; flex: none; background: #fff; border: 1px solid #333; }
.osnap .ck::before { content: "✓"; font: 12px/11px "DejaVu Sans", sans-serif; letter-spacing: 0; text-align: center; }
.osnap .off { gap: 3px; }
.osnap .off::before { width: 15px; height: 15px; background: #ddd; border-color: #b5b5b5; }

.status { height: 20px; flex: none; display: grid; grid-template-columns: 57px 88px 88px 88px 89px 172px 76px 47px 54px 54px 85px 66px 109px 45px 795px 7px; border-top: 1px solid #a3abba; font-size: 12px; line-height: 21px; text-align: center; }
.status span { border-right: 1px solid #a3abba; letter-spacing: -.05px; white-space: nowrap; height: 19px; }
.status span:last-child { border: 0; }
.status .on { background: #e3f3ff; font-weight: bold; }
.status .layer { display: flex; padding-left: 2px; }
.status .layer i { width: 14px; height: 14px; margin: 4px 2px 0 0; background: #000; }
.status .cpu { text-align: left; padding-left: 3px; letter-spacing: .08px; }

.taskbar { height: 40px; flex: none; display: flex; background: linear-gradient(90deg, #22383f 0, #21363f 50%, #1f3044 66%, #1a2742 80%, #192540 100%); color: #fff; font-family: "Noto Sans", sans-serif; }
.start { width: 48px; height: 40px; }
.search { width: 344px; display: flex; align-items: center; gap: 11px; padding: 0 0 1px 10px; background: #f2f2f2; border: 1px solid #bbb; border-bottom: 0; color: #333; font-size: 15px; letter-spacing: -.5px; word-spacing: .5px; }
.apps { display: grid; grid-template-columns: 47px 52px 48px 49px 50px 48px; justify-items: center; }
.apps > svg { width: 48px; height: 40px; }
.apps .open { width: 40px; border-bottom: 2px solid #76b9ed; }
.apps .active { width: 48px; height: 40px; display: grid; place-items: center; background: #4d5f66; border-bottom: 2px solid #76b9ed; }
.tray { margin-left: auto; display: flex; align-items: center; font-size: 12px; letter-spacing: -.3px; height: 40px; padding-right: 4px; }
.tray > svg { width: 70px; height: 40px; }
.lang { margin-left: 7px; width: 28px; }
.clock { width: 76px; text-align: center; line-height: 18px; }
.note { position: relative; width: 46px; height: 40px; padding: 8px 0 0 7px; border-right: 1px solid #7a8496; }
.note svg { width: 24px; height: 24px; }
.note b { position: absolute; left: 16px; top: 18px; width: 17px; height: 17px; border-radius: 50%; border: 1px solid #888; background: #2d3138; font-size: 11px; line-height: 15px; text-align: center; }
```
